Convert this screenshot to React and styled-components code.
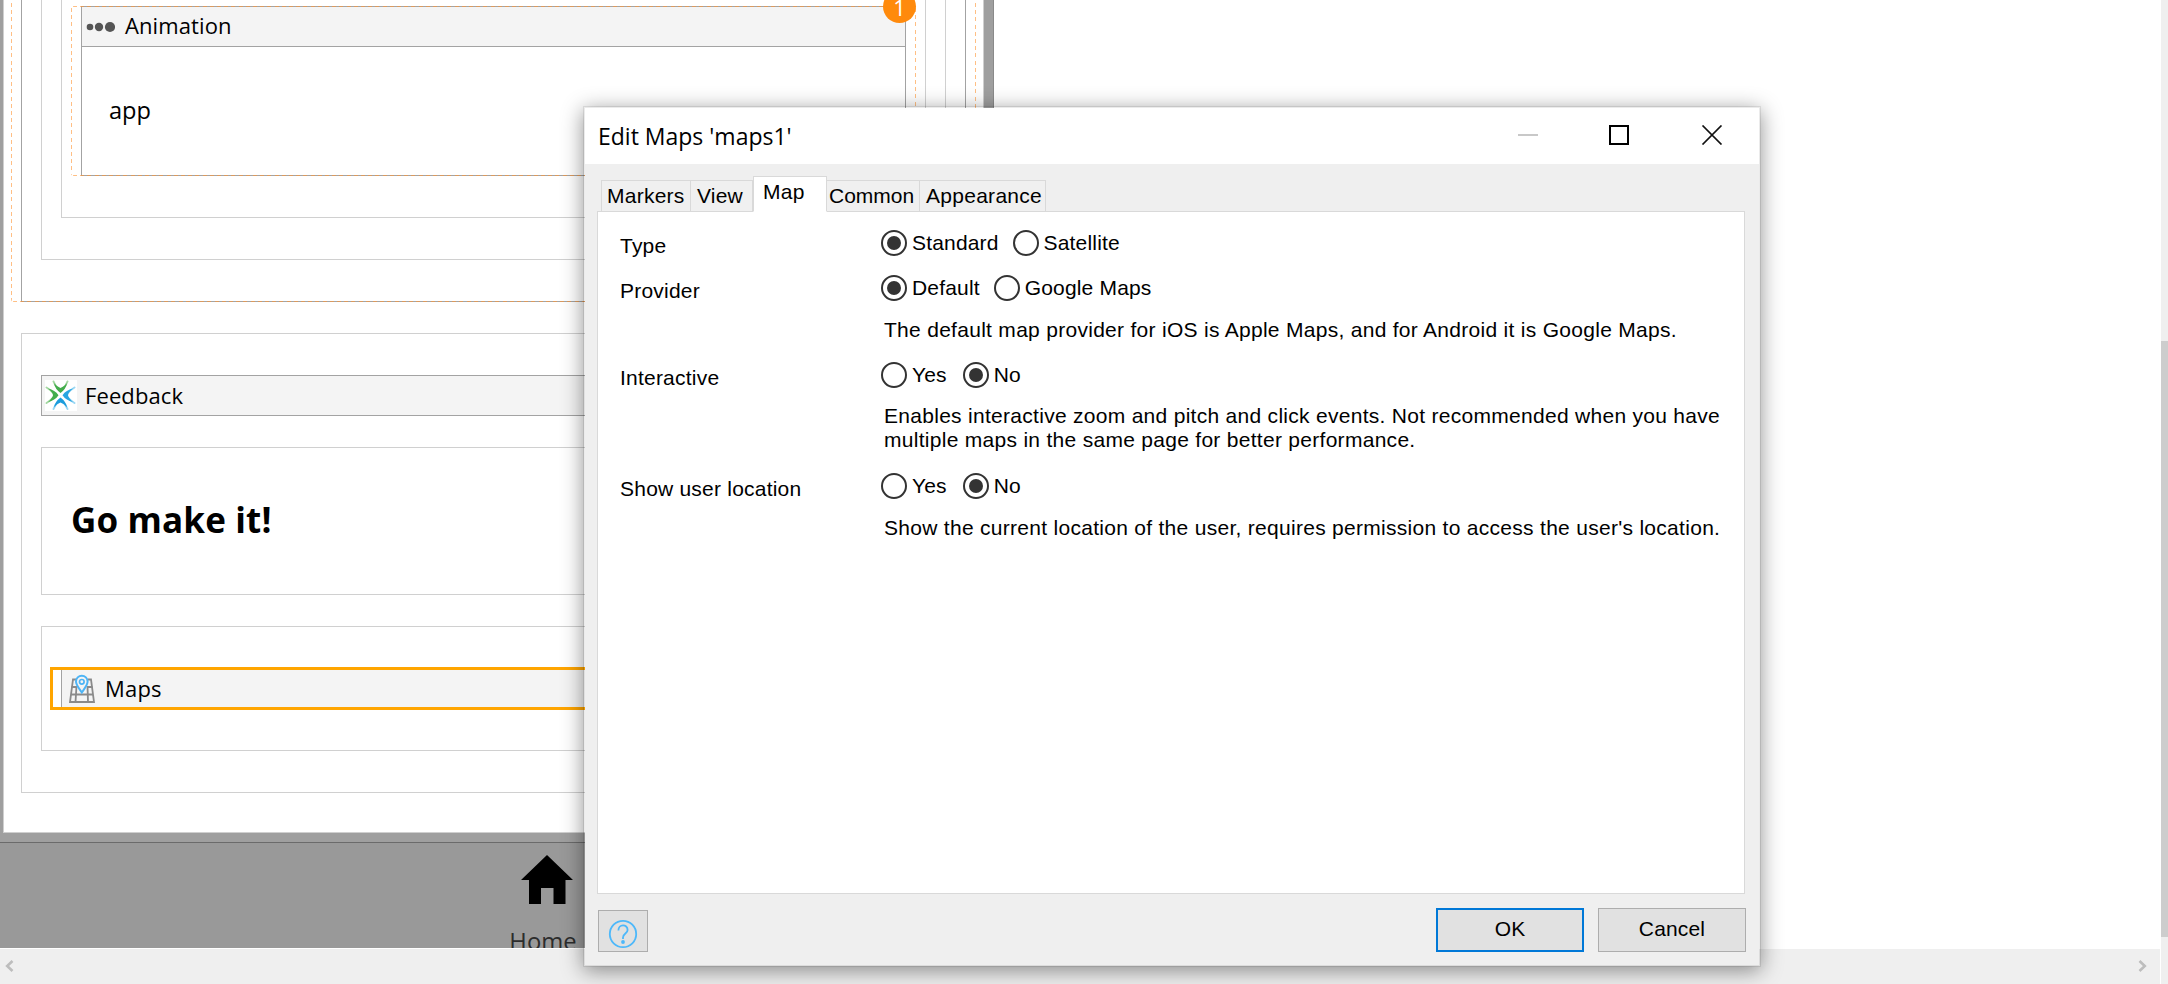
import React from "react";
import styled, { createGlobalStyle, css } from "styled-components";

const GlobalStyle = createGlobalStyle`
  * { box-sizing: border-box; }
  body { margin: 0; background: #fff; overflow: hidden; }
`;

const segoe = css`font-family: "Open Sans", "Noto Sans", sans-serif;`;
const arial = css`font-family: "Liberation Sans", Arial, sans-serif;`;

const Editor = styled.div`
  position: relative;
  width: 2168px;
  height: 984px;
  display: flex;
  overflow: hidden;
  background: #fff;
  color: #000;
  ${segoe}
  font-size: 22px;
`;

const Workspace = styled.div`
  width: 2160px;
  margin-right: 1px;
  display: flex;
  flex-direction: column;
`;

const Canvas = styled.div`
  height: 948px;
  margin-bottom: 1px;
  overflow: hidden;
`;

const DeviceFrame = styled.div`
  width: 994px;
  height: 948px;
  background: #9f9f9f;
  border-right: 1px solid #8a8a8a;
  display: flex;
  flex-direction: column;
`;

const Page = styled.div`
  height: 833px;
  margin: 0 9px 9px 3px;
  padding: 0 7px;
  background: #fff;
  border: 1px solid #cfcfcf;
  border-top: 0;
`;

const dash = "rgba(255, 148, 50, 0.6) 0 4px, transparent 4px 7.2px";

const Region = styled.div`
  position: relative;
  padding: 0 10px;
  &::after {
    content: "";
    position: absolute;
    inset: 0;
    border-radius: ${(p) => (p.$openTop ? "0 0 3px 3px" : "3px")};
    background-image:
      repeating-linear-gradient(to bottom, ${dash}),
      repeating-linear-gradient(to bottom, ${dash}),
      repeating-linear-gradient(to right, ${dash}),
      repeating-linear-gradient(to right, ${dash});
    background-repeat: no-repeat;
    background-position: 0 ${(p) => (p.$openTop ? 3 : 2)}px, 100% ${(p) => (p.$openTop ? 3 : 2)}px, 2px 100%, 2px 0;
    background-size: 1px 100%, 1px 100%, 100% 1px, 100% ${(p) => (p.$openTop ? 0 : 1)}px;
    pointer-events: none;
  }
`;

const Box = styled.div`
  border: 1px solid ${(p) => (p.$strong ? "#a3a3a3" : "#d0d0d0")};
  border-top-width: ${(p) => (p.$openTop ? 0 : 1)}px;
  padding: ${(p) => p.$pad || "0"};
`;

const Section = styled(Box)`
  margin: 31px 10px 0;
`;

const Card = styled(Box)`
  height: ${(p) => p.$height}px;
  margin-top: 31px;
`;

const BlockHeader = styled.div`
  height: ${(p) => (p.$bare ? 40 : 41)}px;
  display: flex;
  align-items: center;
  padding-left: ${(p) => p.$indent || 4}px;
  gap: ${(p) => p.$gap}px;
  background: #f4f4f4;
  border: ${(p) => (p.$bare ? 0 : 1)}px solid #a3a3a3;
  border-bottom-width: 1px;
`;

const BlockName = styled.span`
  line-height: 30px;
  margin-top: ${(p) => p.$lift || -2}px;
  letter-spacing: ${(p) => p.$spacing || 0.1}px;
`;

const AnimationBody = styled.div`
  height: 128px;
  padding: 46px 0 0 27px;
  font-size: 23.6px;
  line-height: 34px;
`;

const Selected = styled.div`
  padding: 0 10px;
  outline: 3px solid #ffa500;
  outline-offset: -2px;
`;

const Heading = styled.div`
  font-size: 35px;
  font-weight: 700;
  line-height: 48px;
  padding: 48px 0 0 29px;
  letter-spacing: 0.15px;
`;

const Badge = styled.div`
  position: absolute;
  z-index: 2;
  top: -16px;
  right: 0;
  width: 33px;
  height: 33px;
  border-radius: 50%;
  background: #ff8a0c;
  color: #fff;
  font-size: 22px;
  line-height: 34px;
  text-align: center;
`;

const Footer = styled.div`
  height: 106px;
  margin-right: -1px;
  border-top: 1px solid #6b6b6b;
  background: #999;
  padding: 12px 0 0 509px;
`;

const NavItem = styled.div`
  width: 68px;
  display: flex;
  flex-direction: column;
  align-items: center;
  color: #2c2c2c;
  line-height: 30px;
  svg { margin-left: 8px; }
  span { margin-top: 22px; font-size: 23.8px; }
`;

const HScroll = styled.div`
  height: 35px;
  background: #efefef;
  display: flex;
  justify-content: space-between;
  padding: 11px 13px 0 5px;
`;

const VScroll = styled.div`
  width: 7px;
  background: #efefef;
  padding-top: 341px;
`;

const VThumb = styled.div`
  height: 596px;
  background: #cdcdcd;
`;

const Dialog = styled.div`
  position: absolute;
  left: 583px;
  top: 106px;
  width: 1178px;
  height: 861px;
  display: flex;
  flex-direction: column;
  border: 2px solid rgba(0, 0, 0, 0.08);
  background: #efefef;
  background-clip: padding-box;
  box-shadow: 0 4px 20px rgba(0, 0, 0, 0.42);
  ${arial}
  font-size: 21px;
`;

const TitleBar = styled.div`
  height: 56px;
  background: #fff;
  display: flex;
  align-items: center;
  justify-content: space-between;
  padding: 0 36px 0 13px;
`;

const Title = styled.div`
  ${segoe}
  font-size: 23px;
  line-height: 30px;
`;

const WindowControls = styled.div`
  display: flex;
  align-items: center;
  gap: 71px;
  margin-top: -3px;
  svg:last-child { margin-left: 1px; }
`;

const Content = styled.div`
  flex: 1;
  background: #efefef;
  padding: 12px 14px 0 12px;
`;

const Tabs = styled.div`
  height: 36px;
  display: flex;
  align-items: flex-end;
  padding-left: 4px;
  margin-bottom: -1px;
  position: relative;
`;

const Tab = styled.div`
  height: ${(p) => (p.$active ? 36 : 32)}px;
  width: ${(p) => p.$width}px;
  padding: 3px 0 0 ${(p) => p.$indent}px;
  line-height: 24px;
  white-space: nowrap;
  letter-spacing: ${(p) => p.$spacing || 0}px;
  border: 1px solid #d9d9d9;
  border-left-width: ${(p) => (p.$joined ? 0 : 1)}px;
  border-bottom-color: ${(p) => (p.$active ? "#fff" : "#d9d9d9")};
  background: ${(p) => (p.$active ? "#fff" : "#f0f0f0")};
`;

const Panel = styled.div`
  height: 683px;
  background: #fff;
  border: 1px solid #d9d9d9;
  padding: 18px 20px 0 22px;
`;

const Field = styled.div`
  display: grid;
  grid-template-columns: 261px 1fr;
  height: ${(p) => p.$height}px;
`;

const Label = styled.div`
  line-height: 24px;
  padding-top: 4px;
  letter-spacing: 0.22px;
`;

const Options = styled.div`
  display: flex;
  align-items: center;
  height: 26px;
  gap: ${(p) => p.$gap}px;
`;

const Option = styled.label`
  display: flex;
  align-items: center;
  gap: 5px;
  line-height: 24px;
  letter-spacing: 0.17px;
`;

const Radio = styled.span`
  width: 26px;
  height: 26px;
  display: flex;
  align-items: center;
  justify-content: center;
  border: 2px solid #333;
  border-radius: 50%;
  &::after {
    content: "";
    width: 14px;
    height: 14px;
    border-radius: 50%;
    background: ${(p) => (p.$on ? "#333" : "transparent")};
  }
`;

const Hint = styled.div`
  line-height: 24px;
  margin: ${(p) => p.$top || 17}px 0 0 3px;
  letter-spacing: 0.288px;
  white-space: pre;
`;

const Actions = styled.div`
  display: flex;
  align-items: flex-end;
  gap: 14px;
  height: 58px;
  margin: 0 -1px 0 1px;
`;

const Button = styled.button`
  width: 148px;
  height: 44px;
  padding: 0 0 2px;
  ${arial}
  font-size: 21px;
  letter-spacing: 0.15px;
  color: #000;
  background: #e1e1e1;
  border: ${(p) => (p.$primary ? "2px solid #0078d7" : "1px solid #adadad")};
`;

const HelpButton = styled(Button)`
  width: 50px;
  height: 42px;
  padding: 5px 0 0;
  margin-right: auto;
  display: flex;
  align-items: center;
  justify-content: center;
`;

const DotsIcon = () => (
  <svg width="29" height="12" viewBox="0 0 29 12" fill="#555">
    <circle cx="4" cy="6" r="3.300" />
    <circle cx="13" cy="6" r="4.200" />
    <circle cx="24" cy="6" r="5.100" />
  </svg>
);

const FeedbackIcon = () => (
  <svg width="32" height="31" viewBox="0 0 32 31">
    <rect width="32" height="31" fill="#fff" />
    <g fill="none" strokeLinecap="round" strokeWidth="2">
      <path stroke="#a5d8a3" d="M8.500 1.500 Q10 6 14 9.500 M22.500 1.500 Q21 6 17 9.500" />
      <path stroke="#a5d8a3" d="M1.500 7.500 Q5 9.500 9.500 14 M1.500 23 Q5 21 9.500 16.500" />
      <path stroke="#9ad7f3" d="M29.500 7.500 Q26 9.500 21.500 14 M29.500 23 Q26 21 21.500 16.500" />
      <path stroke="#9ad7f3" d="M8.500 29 Q10 24.500 14 21 M22.500 29 Q21 24.500 17 21" />
    </g>
    <path fill="#43ad4c" d="M9 3 Q12 7 15.500 8 Q19 7 22 3 Q21 9 15.500 13 Q10 9 9 3 Z" />
    <path fill="#43ad4c" d="M3 8.500 Q10 10 13.500 15.200 Q10 20.500 3 22 Q7.500 18 8 15.200 Q7.500 12 3 8.500 Z" />
    <path fill="#29a5e2" d="M28 8.500 Q21 10 17.500 15.200 Q21 20.500 28 22 Q23.500 18 23 15.200 Q23.500 12 28 8.500 Z" />
    <path fill="#1c9cdc" d="M9 27.500 Q12 23.500 15.500 22.500 Q19 23.500 22 27.500 Q21 21.500 15.500 17.500 Q10 21.500 9 27.500 Z" />
  </svg>
);

const MapsIcon = () => (
  <svg width="26" height="30" viewBox="0 0 26 30" fill="none">
    <g stroke="#8a8a8a" strokeWidth="1.800">
      <path d="M7 5.500 H4 L1 28 H25 L22 5.500 H19" />
      <path d="M2.500 13 H8 M18 13 H23.500 M2 20.500 H24 M7.500 12 L6.500 28 M18.500 12 L19 28" />
    </g>
    <path
      d="M12.800 18.500 C9.500 13.500 7 11 7 7.500 A5.800 5.800 0 0 1 18.600 7.500 C18.600 11 16 13.500 12.800 18.500 Z"
      fill="#f4f4f4"
      stroke="#4db4f5"
      strokeWidth="2"
    />
    <circle cx="12.800" cy="7.800" r="2.300" stroke="#4db4f5" strokeWidth="1.700" />
  </svg>
);

const HomeIcon = () => (
  <svg width="52" height="49" viewBox="0 0 52 49" fill="#000">
    <path d="M26 0 L52 25 H44.500 V49 H32.500 V33 H20 V49 H8 V25 H0 Z" />
  </svg>
);

const HelpIcon = () => (
  <svg width="30" height="30" viewBox="0 0 30 30" fill="none" stroke="#4db8fa" strokeWidth="1.800">
    <circle cx="15" cy="15" r="13.200" />
    <path d="M10.400 11.500 C10.400 4.800 19.600 4.800 19.600 11 C19.600 14.600 15 14.500 15 18.500 V20" />
    <circle cx="15" cy="23" r="1.900" fill="#4db8fa" stroke="none" />
  </svg>
);

const ArrowIcon = ({ flip }) => (
  <svg width="9" height="12" viewBox="0 0 9 12" fill="none" stroke="#bdbdbd" strokeWidth="2.600">
    <path d={flip ? "M1.500 1 L6.800 6 L1.500 11" : "M7.500 1 L2.200 6 L7.500 11"} />
  </svg>
);

function RadioGroup({ options, value, gap }) {
  return (
    <Options $gap={gap}>
      {options.map((name) => (
        <Option key={name}>
          <Radio $on={name === value} />
          {name}
        </Option>
      ))}
    </Options>
  );
}

function DesignCanvas() {
  return (
    <Canvas>
      <DeviceFrame>
        <Page>
          <Region $openTop>
            <Box $strong $openTop $pad="0 19px 41px">
              <Box $openTop $pad="0 19px 41px">
                <Box $openTop $pad="6px 9px 41px">
                  <Region>
                    <Badge>1</Badge>
                    <Box $strong>
                      <BlockHeader $bare $gap={10}>
                        <DotsIcon />
                        <BlockName $lift={-3}>Animation</BlockName>
                      </BlockHeader>
                      <AnimationBody>app</AnimationBody>
                    </Box>
                  </Region>
                </Box>
              </Box>
            </Box>
          </Region>
          <Section $pad="41px 19px">
            <BlockHeader $indent={3} $gap={8}>
              <FeedbackIcon />
              <BlockName>Feedback</BlockName>
            </BlockHeader>
            <Card $height={148}>
              <Heading>Go make it!</Heading>
            </Card>
            <Card $height={125} $pad="41px 9px 0">
              <Selected>
                <BlockHeader $indent={7} $gap={10}>
                  <MapsIcon />
                  <BlockName $spacing={0.2}>Maps</BlockName>
                </BlockHeader>
              </Selected>
            </Card>
          </Section>
        </Page>
        <Footer>
          <NavItem>
            <HomeIcon />
            <span>Home</span>
          </NavItem>
        </Footer>
      </DeviceFrame>
    </Canvas>
  );
}

function EditMapsDialog() {
  return (
    <Dialog>
      <TitleBar>
        <Title>Edit Maps 'maps1'</Title>
        <WindowControls>
          <svg width="20" height="20" viewBox="0 0 20 20">
            <rect y="9" width="20" height="2" fill="#c8c8c8" />
          </svg>
          <svg width="20" height="20" viewBox="0 0 20 20">
            <rect x="1" y="1" width="18" height="18" fill="none" stroke="#000" strokeWidth="2" />
          </svg>
          <svg width="22" height="20" viewBox="0 0 22 20">
            <path d="M1.500 0.500 L20.500 19.500 M20.500 0.500 L1.500 19.500" stroke="#111" strokeWidth="1.700" />
          </svg>
        </WindowControls>
      </TitleBar>
      <Content>
        <Tabs>
          <Tab $width={90} $indent={5} $spacing={0.25}>Markers</Tab>
          <Tab $joined $width={62} $indent={6} $spacing={0.2}>View</Tab>
          <Tab $active $width={74} $indent={9} $spacing={0.3}>Map</Tab>
          <Tab $joined $width={93} $indent={2}>Common</Tab>
          <Tab $joined $width={126} $indent={6} $spacing={0.28}>Appearance</Tab>
        </Tabs>
        <Panel>
          <Field $height={45}>
            <Label>Type</Label>
            <RadioGroup options={["Standard", "Satellite"]} value="Standard" gap={14} />
          </Field>
          <Field $height={87}>
            <Label>Provider</Label>
            <div>
              <RadioGroup options={["Default", "Google Maps"]} value="Default" gap={14} />
              <Hint>The default map provider for iOS is Apple Maps, and for Android it is Google Maps.</Hint>
            </div>
          </Field>
          <Field $height={111}>
            <Label>Interactive</Label>
            <div>
              <RadioGroup options={["Yes", "No"]} value="No" gap={16} />
              <Hint $top={16}>
                {"Enables interactive zoom and pitch and click events. Not recommended when you have\nmultiple maps in the same page for better performance."}
              </Hint>
            </div>
          </Field>
          <Field $height={87}>
            <Label>Show user location</Label>
            <div>
              <RadioGroup options={["Yes", "No"]} value="No" gap={16} />
              <Hint>Show the current location of the user, requires permission to access the user's location.</Hint>
            </div>
          </Field>
        </Panel>
        <Actions>
          <HelpButton>
            <HelpIcon />
          </HelpButton>
          <Button $primary>OK</Button>
          <Button>Cancel</Button>
        </Actions>
      </Content>
    </Dialog>
  );
}

export default function App() {
  return (
    <>
      <GlobalStyle />
      <Editor>
        <Workspace>
          <DesignCanvas />
          <HScroll>
            <ArrowIcon />
            <ArrowIcon flip />
          </HScroll>
        </Workspace>
        <VScroll>
          <VThumb />
        </VScroll>
        <EditMapsDialog />
      </Editor>
    </>
  );
}
